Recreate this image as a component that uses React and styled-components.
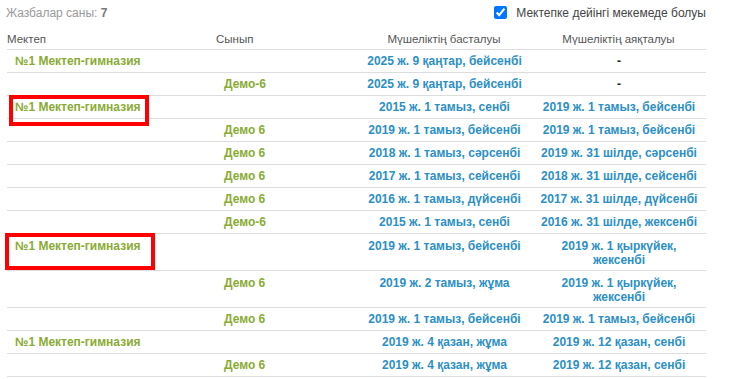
import React from "react";
import styled, { createGlobalStyle } from "styled-components";

const GlobalStyle = createGlobalStyle`
  body {
    margin: 0;
    background: #fff;
    font-family: "Liberation Sans", Arial, sans-serif;
  }
`;

const Page = styled.div`
  padding: 0 40px 0 7px;
  width: 699px;
`;

const TopBar = styled.div`
  display: flex;
  align-items: center;
  justify-content: space-between;
  height: 25px;
  padding-bottom: 3px;
`;

const Count = styled.div`
  font-size: 12px;
  color: #9a9a9a;
  margin-left: -1px;
  b {
    color: #777;
    font-weight: bold;
  }
`;

const CheckLabel = styled.label`
  display: flex;
  align-items: center;
  gap: 9px;
  font-size: 12px;
  color: #444;
  input {
    margin: 0;
    width: 13px;
    height: 13px;
  }
`;

const Table = styled.table`
  width: 699px;
  border-collapse: collapse;
  table-layout: fixed;
`;

const Th = styled.th`
  font-size: 11.5px;
  font-weight: normal;
  color: #555;
  text-align: ${(p) => (p.$center ? "center" : "left")};
  padding: 5px 1px 3px 0;
  height: 12px;
  line-height: 13px;
  border-bottom: 1px solid #ddd;
`;

const Td = styled.td`
  position: relative;
  font-size: 12px;
  font-weight: bold;
  line-height: 14px;
  padding: ${(p) => (p.$tall ? "5px 8px 3px" : "4px 8px")};
  vertical-align: top;
  text-align: ${(p) => (p.$center ? "center" : "left")};
  color: ${(p) => (p.$tone === "green" ? "#8aab35" : p.$tone === "dash" ? "#222" : "#2c8fc6")};
  border-bottom: 1px solid #ddd;
`;

const Mark = styled.span`
  position: absolute;
  left: ${(p) => p.$left}px;
  top: -1px;
  width: ${(p) => p.$w}px;
  height: ${(p) => p.$h}px;
  border: 4px solid #f00;
  box-sizing: border-box;
  pointer-events: none;
`;

const rows = [
  { school: "№1 Мектеп-гимназия", start: "2025 ж. 9 қаңтар, бейсенбі", end: "-" },
  { cls: "Демо-6", start: "2025 ж. 9 қаңтар, бейсенбі", end: "-" },
  { school: "№1 Мектеп-гимназия", start: "2015 ж. 1 тамыз, сенбі", end: "2019 ж. 1 тамыз, бейсенбі", mark: { left: 2, w: 140, h: 31 } },
  { cls: "Демо 6", start: "2019 ж. 1 тамыз, бейсенбі", end: "2019 ж. 1 тамыз, бейсенбі" },
  { cls: "Демо 6", start: "2018 ж. 1 тамыз, сәрсенбі", end: "2019 ж. 31 шілде, сәрсенбі" },
  { cls: "Демо 6", start: "2017 ж. 1 тамыз, сейсенбі", end: "2018 ж. 31 шілде, сейсенбі" },
  { cls: "Демо 6", start: "2016 ж. 1 тамыз, дүйсенбі", end: "2017 ж. 31 шілде, дүйсенбі" },
  { cls: "Демо-6", start: "2015 ж. 1 тамыз, сенбі", end: "2016 ж. 31 шілде, жексенбі" },
  { school: "№1 Мектеп-гимназия", start: "2019 ж. 1 тамыз, бейсенбі", end: "2019 ж. 1 қыркүйек, жексенбі", tall: true, mark: { left: -2, w: 150, h: 37 } },
  { cls: "Демо 6", start: "2019 ж. 2 тамыз, жұма", end: "2019 ж. 1 қыркүйек, жексенбі", tall: true },
  { cls: "Демо 6", start: "2019 ж. 1 тамыз, бейсенбі", end: "2019 ж. 1 тамыз, бейсенбі" },
  { school: "№1 Мектеп-гимназия", start: "2019 ж. 4 қазан, жұма", end: "2019 ж. 12 қазан, сенбі" },
  { cls: "Демо 6", start: "2019 ж. 4 қазан, жұма", end: "2019 ж. 12 қазан, сенбі" },
];

export default function App() {
  return (
    <Page>
      <GlobalStyle />
      <TopBar>
        <Count>
          Жазбалар саны: <b>7</b>
        </Count>
        <CheckLabel>
          <input type="checkbox" defaultChecked />
          Мектепке дейінгі мекемеде болуы
        </CheckLabel>
      </TopBar>
      <Table>
        <colgroup>
          <col style={{ width: 209 }} />
          <col style={{ width: 141 }} />
          <col style={{ width: 175 }} />
          <col style={{ width: 174 }} />
        </colgroup>
        <thead>
          <tr>
            <Th>Мектеп</Th>
            <Th>Сынып</Th>
            <Th $center>Мүшеліктің басталуы</Th>
            <Th $center>Мүшеліктің аяқталуы</Th>
          </tr>
        </thead>
        <tbody>
          {rows.map((r, i) => (
            <tr key={i}>
              <Td $tone="green" $tall={r.tall}>
                {r.school || ""}
                {r.mark && <Mark $left={r.mark.left} $w={r.mark.w} $h={r.mark.h} />}
              </Td>
              <Td $tone="green" $tall={r.tall}>{r.cls || ""}</Td>
              <Td $center $tall={r.tall}>{r.start}</Td>
              <Td $center $tall={r.tall} $tone={r.end === "-" ? "dash" : "blue"}>
                {r.end}
              </Td>
            </tr>
          ))}
        </tbody>
      </Table>
    </Page>
  );
}
